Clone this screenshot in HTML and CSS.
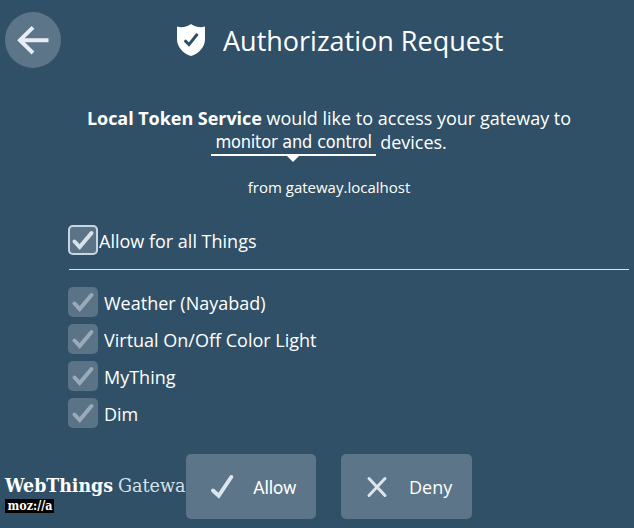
FILE: index.html
```html
<!DOCTYPE html>
<html lang="en">
<head>
  <meta charset="UTF-8">
  <meta name="viewport" content="width=device-width, initial-scale=1.0">
  <title>Authorization Request</title>
  <link rel="stylesheet" href="styles.css">
</head>
<body>
  <header class="header">
    <button class="back-button" aria-label="Back">
      <svg width="56" height="56" viewBox="0 0 56 56"><path d="M43.5 28.2H15.5M28 15.3L15 28.2L28 41"/></svg>
    </button>
    <h1 class="title">
      <svg class="shield" width="28" height="32" viewBox="0 0 28 32">
        <path class="shield-body" d="M14 0C11 2.5 5 4 0 2.6V15C0 23 6 29.500 14 32C22 29.500 28 23 28 15V2.600C23 4 17 2.500 14 0Z"/>
        <path class="shield-check" d="M8.500 17.200L12 20.600L19.800 10.800"/>
      </svg>
      <span>Authorization Request</span>
    </h1>
  </header>

  <main>
    <div class="request">
      <p><strong>Local Token Service</strong> would like to access your gateway to</p>
      <p class="scope-line"><span class="scope">monitor and control</span><span>devices.</span></p>
    </div>
    <p class="origin">from gateway.localhost</p>

    <div class="things">
      <label class="all-things">
        <span class="checkbox focused"><svg width="30" height="30" viewBox="0 0 30 30"><path d="M6.500 16.500L11.700 22L23.500 8"/></svg></span>
        <span>Allow for all Things</span>
      </label>
      <ul class="thing-list">
        <li>
          <span class="checkbox disabled"><svg width="30" height="30" viewBox="0 0 30 30"><path d="M6.500 16.500L11.700 22L23.500 8"/></svg></span>
          <span>Weather (Nayabad)</span>
        </li>
        <li>
          <span class="checkbox disabled"><svg width="30" height="30" viewBox="0 0 30 30"><path d="M6.500 16.500L11.700 22L23.500 8"/></svg></span>
          <span>Virtual On/Off Color Light</span>
        </li>
        <li>
          <span class="checkbox disabled"><svg width="30" height="30" viewBox="0 0 30 30"><path d="M6.500 16.500L11.700 22L23.500 8"/></svg></span>
          <span>MyThing</span>
        </li>
        <li>
          <span class="checkbox disabled"><svg width="30" height="30" viewBox="0 0 30 30"><path d="M6.500 16.500L11.700 22L23.500 8"/></svg></span>
          <span>Dim</span>
        </li>
      </ul>
    </div>
  </main>

  <footer class="footer">
    <svg class="wordmark" width="181" height="46" viewBox="0 0 181 46">
      <text class="brand" x="0" y="19.500" textLength="108" lengthAdjust="spacingAndGlyphs">WebThings</text>
      <text class="product" x="113" y="19.500" textLength="67.500" lengthAdjust="spacingAndGlyphs">Gatewa</text>
      <rect width="49" height="14" y="27"/>
      <text class="mozilla" x="2.500" y="38" textLength="45" lengthAdjust="spacingAndGlyphs">moz://a</text>
    </svg>
    <button class="action allow">
      <svg width="30" height="30" viewBox="0 0 30 30"><path d="M6 18.500L11.700 23.800L24.300 5"/></svg>
      <span>Allow</span>
    </button>
    <button class="action deny">
      <svg width="30" height="30" viewBox="0 0 30 30"><path d="M7 6.500L23 23.500M23 6.500L7 23.500"/></svg>
      <span>Deny</span>
    </button>
  </footer>
</body>
</html>
```
FILE: styles.css
```css
* {
  box-sizing: border-box;
  margin: 0;
  padding: 0;
}
body {
  display: flex;
  flex-direction: column;
  height: 528px;
  overflow: hidden;
  background: #305067;
  color: #fff;
  font-family: "Open Sans", sans-serif;
  font-size: 18px;
}
svg {
  display: block;
  flex: none;
}
button {
  border: none;
  background: #5d7589;
  color: #fff;
  font-size: 18px;
}

/* Header */
.header {
  display: flex;
  align-items: center;
  height: 80px;
  padding-left: 5px;
}
.back-button {
  width: 56px;
  height: 56px;
  border-radius: 50%;
}
.back-button path {
  fill: none;
  stroke: #e6edf5;
  stroke-width: 4;
}
.title {
  display: flex;
  align-items: center;
  margin-left: 116px;
  font-size: 27px;
  font-weight: 400;
  line-height: 38px;
  white-space: nowrap;
}
.title span {
  margin: 2px 0 0 18px;
}
.shield-body {
  fill: #fff;
}
.shield-check {
  fill: none;
  stroke: #305067;
  stroke-width: 3;
  stroke-linecap: round;
}

/* Request text */
.request {
  padding: 26px 0 0 24px;
  line-height: 24px;
  text-align: center;
  white-space: nowrap;
}
.request strong {
  letter-spacing: -0.05px;
}
.scope-line {
  display: flex;
  justify-content: center;
}
.scope {
  position: relative;
  width: 165px;
  height: 26px;
  margin-right: 4px;
  border-bottom: 2px solid #fff;
  font-family: "DejaVu Sans Condensed", "DejaVu Sans", sans-serif;
  font-size: 18px;
  font-stretch: condensed;
  letter-spacing: -0.2px;
}
.scope::after {
  content: "";
  position: absolute;
  top: 26px;
  left: 76px;
  border: 6px solid transparent;
  border-top-color: #fff;
  border-bottom: none;
}
.origin {
  margin-top: 21px;
  padding-left: 24px;
  font-size: 15px;
  line-height: 20px;
  text-align: center;
}

/* Things */
.things {
  margin: 28px 5px 0 68px;
}
.all-things {
  display: flex;
  align-items: center;
  height: 45px;
  padding-bottom: 14px;
  border-bottom: 1px solid #d5e2ec;
  margin-left: 1px;
}
.all-things .checkbox {
  margin-left: -1px;
}
.all-things span + span {
  margin: 2px 0 0 1px;
}
.thing-list {
  list-style: none;
  padding-top: 17px;
}
.thing-list li {
  display: flex;
  align-items: center;
  gap: 6px;
  height: 30px;
  margin-bottom: 7px;
}
.thing-list li > span:last-child {
  margin-top: 2px;
}
.checkbox {
  width: 30px;
  height: 30px;
  border-radius: 5px;
  background: #5a7387;
}
.checkbox path {
  fill: none;
  stroke: #d9e2e9;
  stroke-width: 4;
  stroke-linecap: round;
}
.checkbox.focused {
  box-shadow: inset 0 0 0 2px #c9d6df;
}
.checkbox.disabled path {
  stroke: #9aaab8;
}

/* Footer */
.footer {
  display: flex;
  align-items: flex-start;
  height: 74px;
  margin-top: auto;
  padding-left: 5px;
}
.wordmark {
  margin-top: 18px;
  overflow: visible;
}
.wordmark text {
  fill: #fff;
  font-family: "DejaVu Serif", serif;
  font-size: 19px;
}
.wordmark .brand {
  font-weight: 700;
}
.wordmark .product {
  fill: #d5e2ec;
}
.wordmark .mozilla {
  font-size: 12px;
  font-weight: 700;
}
.action {
  display: flex;
  align-items: center;
  height: 65px;
  border-radius: 5px;
}
.action path {
  fill: none;
  stroke: #dce5ed;
  stroke-width: 4;
  stroke-linecap: round;
}
.allow {
  width: 130px;
  padding-left: 21px;
  font-family: Roboto, sans-serif;
}
.allow span {
  margin: 2px 0 0 16px;
  letter-spacing: -0.2px;
}
.deny {
  width: 131px;
  margin-left: 25px;
  padding-left: 21px;
  font-family: "Open Sans", sans-serif;
}
.deny path {
  stroke-width: 3;
}
.deny span {
  margin-left: 17px;
}
```
